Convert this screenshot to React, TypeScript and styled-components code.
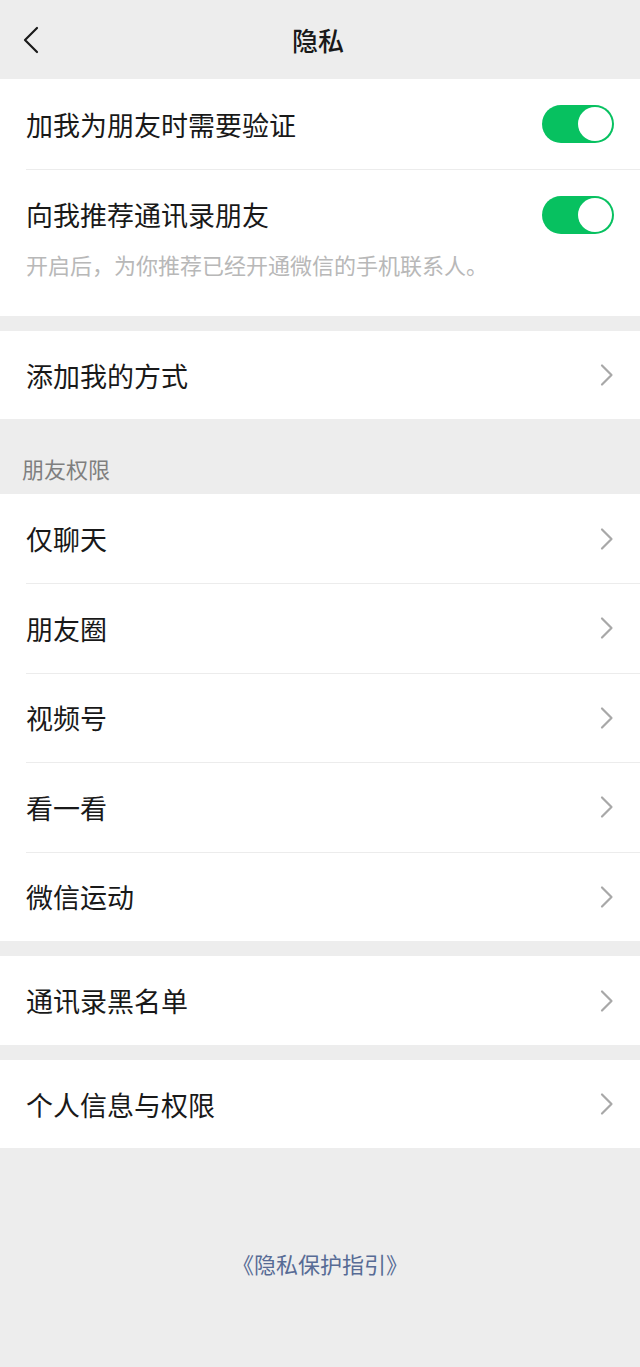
import React from "react";
import styled, { createGlobalStyle } from "styled-components";

const GlobalStyle = createGlobalStyle`
  html, body {
    margin: 0;
    padding: 0;
    background: #ededed;
  }
  body {
    font-family: "Noto Sans CJK SC", "Noto Sans", sans-serif;
    color: #191919;
  }
`;

const Page = styled.div`
  width: 640px;
  min-height: 1367px;
  background: #ededed;
  display: flex;
  flex-direction: column;
`;

const NavBar = styled.header`
  height: 79px;
  display: grid;
  grid-template-columns: 80px 1fr 80px;
  align-items: center;
`;

const BackButton = styled.div`
  display: flex;
  align-items: center;
  padding-left: 22px;
  height: 100%;
`;

const Title = styled.h1`
  margin: 0;
  text-align: center;
  font-size: 26px;
  font-weight: 500;
  color: #191919;
  padding-right: 4px;
`;

const Group = styled.section<{ $gap?: number }>`
  background: #fff;
  margin-top: ${(p) => p.$gap ?? 0}px;
  display: flex;
  flex-direction: column;
`;

const Row = styled.div<{ $h?: number; $divider?: boolean }>`
  box-sizing: border-box;
  height: ${(p) => p.$h ?? 89}px;
  display: flex;
  align-items: center;
  justify-content: space-between;
  margin-left: 26px;
  padding-right: 26px;
  border-top: ${(p) => (p.$divider ? "1px solid #ececec" : "none")};
`;

const Label = styled.span`
  font-size: 27px;
  font-weight: 400;
  color: #191919;
  line-height: 1;
`;

const ToggleBlock = styled.div`
  display: flex;
  flex-direction: column;
  margin-left: 26px;
  border-top: 1px solid #ececec;
  padding-bottom: 37px;
`;

const ToggleLine = styled.div`
  height: 89px;
  display: flex;
  align-items: center;
  justify-content: space-between;
  padding-right: 26px;
`;

const Hint = styled.p`
  margin: -10px 0 0;
  font-size: 22px;
  line-height: 30px;
  color: #b8b8b8;
`;

const SwitchTrack = styled.div`
  width: 72px;
  height: 38px;
  border-radius: 19px;
  background: #07c160;
  display: flex;
  align-items: center;
  justify-content: flex-end;
  padding: 2px;
  box-sizing: border-box;
`;

const SwitchKnob = styled.div`
  width: 34px;
  height: 34px;
  border-radius: 50%;
  background: #fff;
`;

const SectionTitle = styled.div`
  padding: 34px 22px 11px;
  font-size: 22px;
  line-height: 30px;
  color: #7f7f7f;
`;

const Footer = styled.div`
  flex: 1;
  display: flex;
  justify-content: center;
  padding-top: 100px;
`;

const Link = styled.a`
  font-size: 22px;
  line-height: 30px;
  color: #576b95;
  text-decoration: none;
`;

const Chevron = () => (
  <svg width="14" height="24" viewBox="0 0 14 24" fill="none">
    <path d="M2 2.5 L11.5 12 L2 21.5" stroke="#a8a8a8" strokeWidth="2.2" strokeLinecap="round" strokeLinejoin="round" />
  </svg>
);

const BackIcon = () => (
  <svg width="18" height="28" viewBox="0 0 18 28" fill="none">
    <path d="M15 2 L3 14 L15 26" stroke="#1a1a1a" strokeWidth="2.2" strokeLinecap="round" strokeLinejoin="round" />
  </svg>
);

const Switch = () => (
  <SwitchTrack>
    <SwitchKnob />
  </SwitchTrack>
);

const LinkRow: React.FC<{ label: string; divider?: boolean; h?: number }> = ({ label, divider, h }) => (
  <Row $divider={divider} $h={h}>
    <Label>{label}</Label>
    <Chevron />
  </Row>
);

const friendPerms = ["仅聊天", "朋友圈", "视频号", "看一看", "微信运动"];

export default function App() {
  return (
    <>
      <GlobalStyle />
      <Page>
        <NavBar>
          <BackButton>
            <BackIcon />
          </BackButton>
          <Title>隐私</Title>
          <div />
        </NavBar>

        <Group>
          <Row $h={90}>
            <Label>加我为朋友时需要验证</Label>
            <Switch />
          </Row>
          <ToggleBlock>
            <ToggleLine>
              <Label>向我推荐通讯录朋友</Label>
              <Switch />
            </ToggleLine>
            <Hint>开启后，为你推荐已经开通微信的手机联系人。</Hint>
          </ToggleBlock>
        </Group>

        <Group $gap={15}>
          <LinkRow label="添加我的方式" h={88} />
        </Group>

        <SectionTitle>朋友权限</SectionTitle>
        <Group>
          {friendPerms.map((p, i) => (
            <LinkRow key={p} label={p} divider={i > 0} h={i > 0 ? 89.5 : 89} />
          ))}
        </Group>

        <Group $gap={15}>
          <LinkRow label="通讯录黑名单" />
        </Group>

        <Group $gap={15}>
          <LinkRow label="个人信息与权限" h={88} />
        </Group>

        <Footer>
          <Link>《隐私保护指引》</Link>
        </Footer>
      </Page>
    </>
  );
}
